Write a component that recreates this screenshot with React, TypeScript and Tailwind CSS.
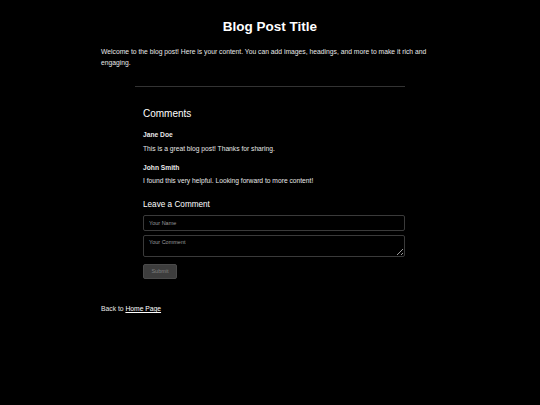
import React from "react";

export default function App() {
  return (
    <div className="min-h-[405px] w-full bg-black text-[#e8e8e8]" style={{ fontFamily: '"Liberation Sans", Arial, sans-serif' }}>
      <div className="mx-auto w-[338px] pt-[18px]">
        <h1 className="text-center text-[13.5px] font-bold leading-[18px] text-white">Blog Post Title</h1>
        <p className="mt-[10px] text-[6.75px] leading-[11px]">
          Welcome to the blog post! Here is your content. You can add images, headings, and more to make it rich and engaging.
        </p>
      </div>
      <div className="mx-auto mt-[18px] w-[270px] border-t border-[#333]">
        <div className="pl-[8px] pt-[20px]">
          <h2 className="text-[10px] leading-[14px] text-white">Comments</h2>
          <div className="mt-[9px]">
            <div className="text-[6.7px] font-bold leading-[9px]">Jane Doe</div>
            <p className="mt-[5px] text-[6.7px] leading-[9px]">This is a great blog post! Thanks for sharing.</p>
          </div>
          <div className="mt-[10px]">
            <div className="text-[6.7px] font-bold leading-[9px]">John Smith</div>
            <p className="mt-[4px] text-[6.7px] leading-[9px]">I found this very helpful. Looking forward to more content!</p>
          </div>
          <h3 className="mt-[14px] text-[8.2px] leading-[11px] text-white">Leave a Comment</h3>
          <input
            placeholder="Your Name"
            className="mt-[5px] block h-[16px] w-full rounded-[2px] border border-[#3a3a3a] bg-black px-[5px] text-[5.5px] text-white placeholder:text-[#999] outline-none"
          />
          <textarea
            placeholder="Your Comment"
            className="mt-[4px] block h-[22px] w-full rounded-[2px] border border-[#3a3a3a] bg-black px-[5px] py-[3px] text-[5.5px] leading-[7px] text-white placeholder:text-[#999] outline-none"
          />
          <button className="mt-[7px] block h-[15px] w-[34px] rounded-[2px] border border-[#4a4a4a] bg-[#3d3d3d] text-[5.5px] text-[#808080]">
            Submit
          </button>
        </div>
      </div>
      <div className="mx-auto mt-[25px] w-[338px] text-[6.75px] leading-[9px]">
        Back to <a className="text-white underline">Home Page</a>
      </div>
    </div>
  );
}
